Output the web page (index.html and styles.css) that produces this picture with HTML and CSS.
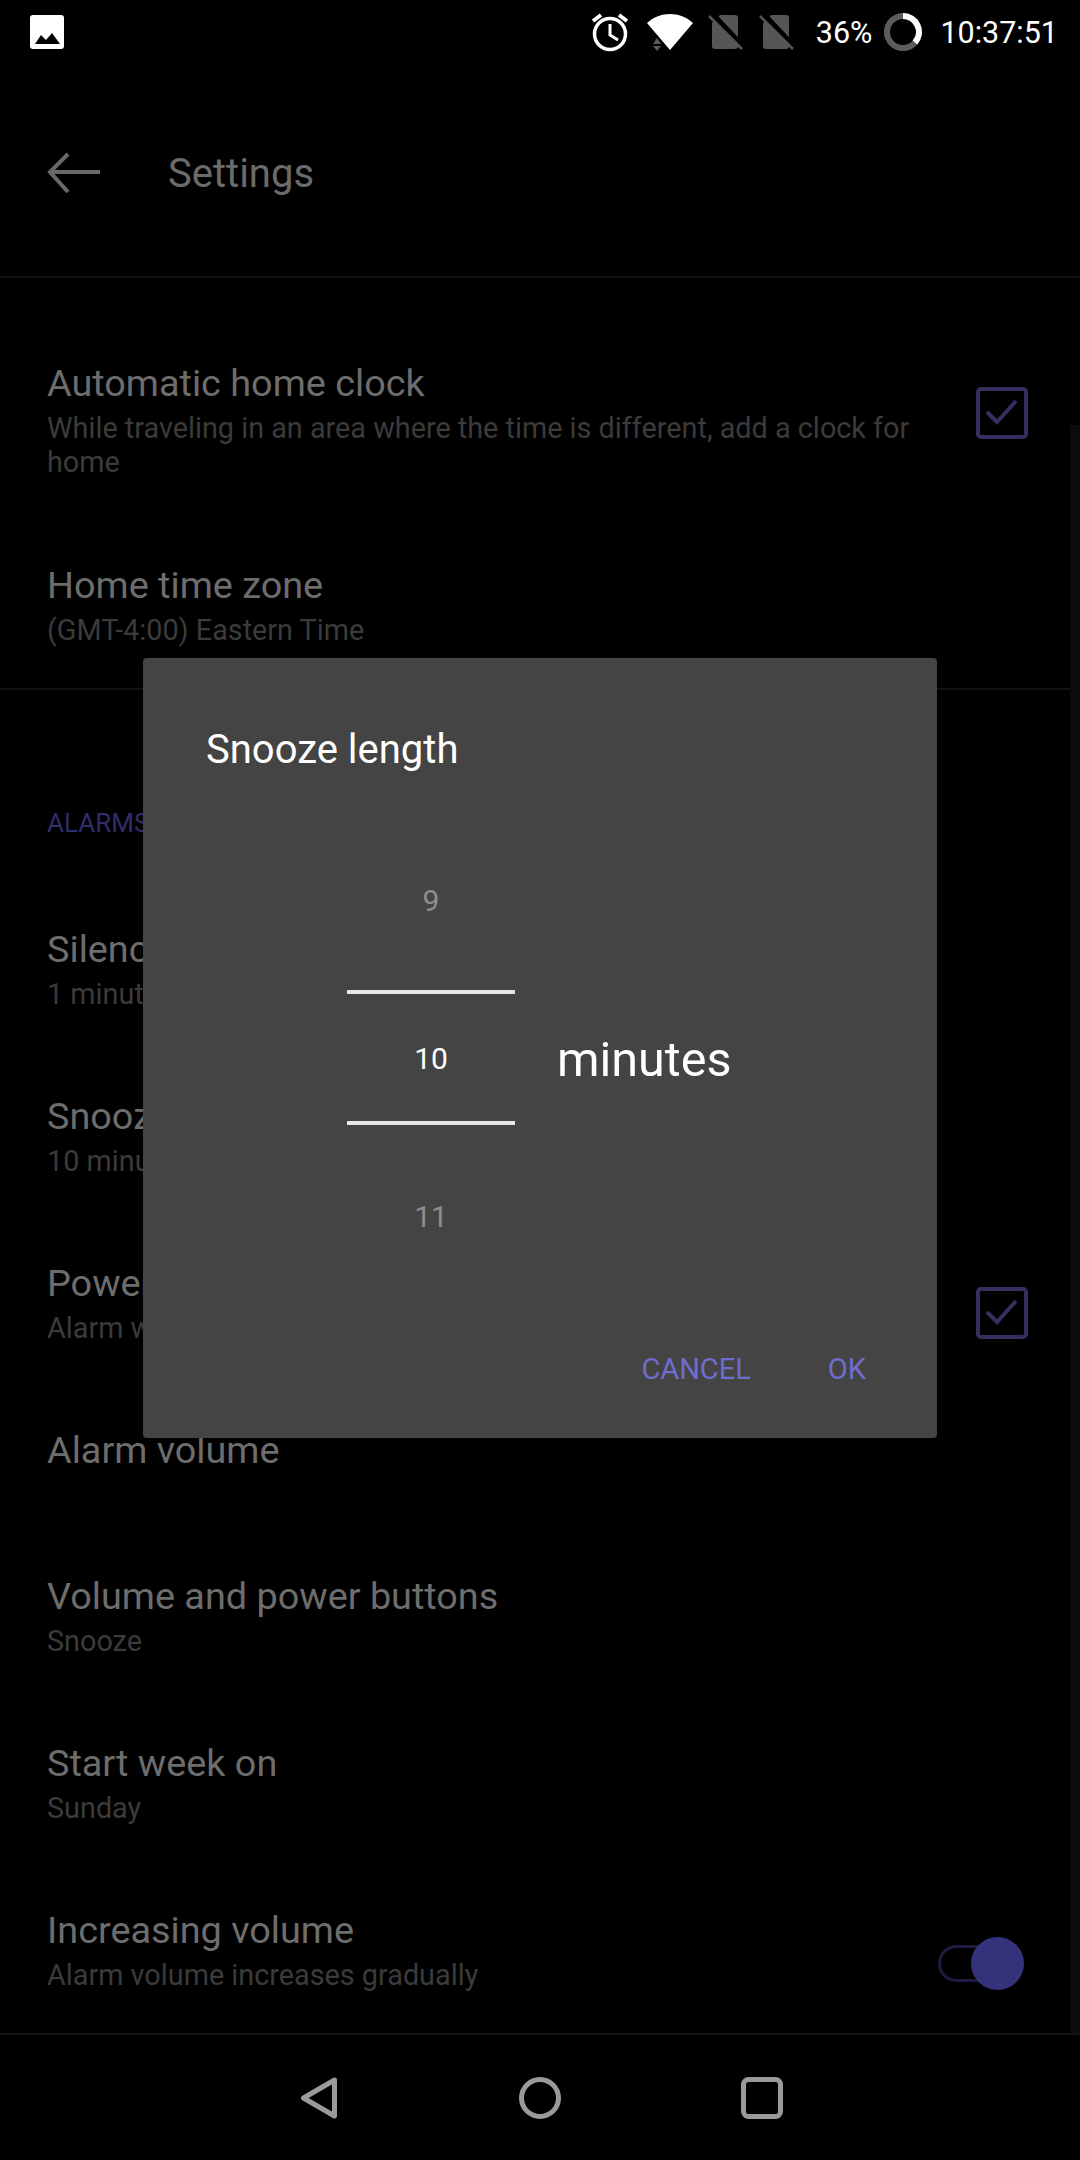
FILE: index.html
```html
<!DOCTYPE html>
<html>
  <head>
    <meta name="viewport" content="width=device-width, initial-scale=1" />
    <title>Settings</title>
    <link rel="stylesheet" href="styles.css">
  </head>
  <body>
    <div class="screen">
      <div class="statusbar">
        <svg class="icon-picture" width="34" height="34" viewBox="0 0 34 34">
          <path fill="#fff" d="M3 0h28a3 3 0 0 1 3 3v28a3 3 0 0 1-3 3H3a3 3 0 0 1-3-3V3a3 3 0 0 1 3-3z"/>
          <path fill="#000" d="M5 29l6-9 5 5 6-7 8 11z"/>
        </svg>
        <div class="status-right">
          <svg class="icon-alarm" width="38" height="40" viewBox="0 0 38 40">
            <g fill="none" stroke="#fff" stroke-width="3.5">
              <circle cx="19" cy="22" r="15.5"/>
              <path d="M19 12v11l8 5" stroke-width="3"/>
              <path d="M2 9l8-6M36 9l-8-6" stroke-width="4"/>
            </g>
          </svg>
          <svg class="icon-wifi" width="46" height="38" viewBox="0 0 46 38">
            <path fill="#fff" d="M0 10C13-2 33-2 46 10L23 37z"/>
            <path fill="#5a5a5a" d="M10 25l-4 6h8zM6 33h8l-4 5z"/>
          </svg>
          <svg class="icon-sim" width="36" height="36" viewBox="0 0 36 36">
            <path fill="#565656" d="M12 1h15a3 3 0 0 1 3 3v28a3 3 0 0 1-3 3H7a3 3 0 0 1-3-3V9z"/>
            <path stroke="#000" stroke-width="6" d="M4 0l32 34"/>
            <path stroke="#565656" stroke-width="2.5" d="M1 2l33 33"/>
          </svg>
          <svg class="icon-sim" width="36" height="36" viewBox="0 0 36 36">
            <path fill="#565656" d="M12 1h15a3 3 0 0 1 3 3v28a3 3 0 0 1-3 3H7a3 3 0 0 1-3-3V9z"/>
            <path stroke="#000" stroke-width="6" d="M4 0l32 34"/>
            <path stroke="#565656" stroke-width="2.5" d="M1 2l33 33"/>
          </svg>
          <span class="battery-text">36%</span>
          <svg class="icon-ring" width="38" height="38" viewBox="0 0 38 38">
            <circle cx="19" cy="19" r="16" fill="none" stroke="#5c5c5c" stroke-width="6"/>
            <path d="M19 3A16 16 0 0 1 31 29.500" fill="none" stroke="#fff" stroke-width="6"/>
          </svg>
          <span class="clock">10:37:51</span>
        </div>
      </div>

      <div class="toolbar">
        <svg class="icon-back" width="54" height="42" viewBox="0 0 54 42">
          <path d="M53 20H4M21 2L3 20l18 20" fill="none" stroke="#686868" stroke-width="4"/>
        </svg>
        <span class="toolbar-title">Settings</span>
      </div>

      <div class="list">
        <div class="section">
          <div class="row row-tall">
            <div class="row-text">
              <div class="row-title">Automatic home clock</div>
              <div class="row-sub">While traveling in an area where the time is different, add a clock for home</div>
            </div>
            <svg class="checkbox" width="52" height="52" viewBox="0 0 52 52">
              <rect x="2" y="2" width="48" height="48" rx="3" fill="none" stroke="#33305f" stroke-width="4"/>
              <path d="M11 25l10 10 19-21" fill="none" stroke="#33305f" stroke-width="4"/>
            </svg>
          </div>
          <div class="row row-last">
            <div class="row-text">
              <div class="row-title">Home time zone</div>
              <div class="row-sub">(GMT-4:00) Eastern Time</div>
            </div>
          </div>
        </div>

        <div class="section-head">ALARMS</div>

        <div class="row">
          <div class="row-text">
            <div class="row-title">Silence after</div>
            <div class="row-sub">1 minute</div>
          </div>
        </div>
        <div class="row">
          <div class="row-text">
            <div class="row-title">Snooze length</div>
            <div class="row-sub">10 minutes</div>
          </div>
        </div>
        <div class="row">
          <div class="row-text">
            <div class="row-title">Power button</div>
            <div class="row-sub">Alarm will snooze</div>
          </div>
          <svg class="checkbox" width="52" height="52" viewBox="0 0 52 52">
            <rect x="2" y="2" width="48" height="48" rx="3" fill="none" stroke="#33305f" stroke-width="4"/>
            <path d="M11 25l10 10 19-21" fill="none" stroke="#33305f" stroke-width="4"/>
          </svg>
        </div>
        <div class="row row-single">
          <div class="row-text">
            <div class="row-title">Alarm volume</div>
          </div>
        </div>
        <div class="row">
          <div class="row-text">
            <div class="row-title">Volume and power buttons</div>
            <div class="row-sub">Snooze</div>
          </div>
        </div>
        <div class="row">
          <div class="row-text">
            <div class="row-title">Start week on</div>
            <div class="row-sub">Sunday</div>
          </div>
        </div>
        <div class="row row-last">
          <div class="row-text">
            <div class="row-title">Increasing volume</div>
            <div class="row-sub">Alarm volume increases gradually</div>
          </div>
          <div class="toggle">
            <div class="toggle-track"></div>
            <div class="toggle-knob"></div>
          </div>
        </div>
      </div>

      <div class="navbar">
        <svg width="38" height="42" viewBox="0 0 38 42">
          <path d="M34.500 3L3.500 21l31 18z" fill="none" stroke="#9a9a9a" stroke-width="5" stroke-linejoin="round"/>
        </svg>
        <svg class="nav-home" width="42" height="42" viewBox="0 0 42 42">
          <circle cx="21" cy="21" r="18.500" fill="none" stroke="#9a9a9a" stroke-width="5"/>
        </svg>
        <svg class="nav-recent" width="42" height="42" viewBox="0 0 42 42">
          <rect x="2.500" y="2.500" width="37" height="37" rx="5" fill="none" stroke="#9a9a9a" stroke-width="5"/>
        </svg>
      </div>

      <div class="scrollbar"></div>

      <div class="dialog">
        <div class="dialog-title">Snooze length</div>
        <div class="picker-row">
          <div class="picker">
            <div class="picker-item picker-first">9</div>
            <div class="picker-item picker-current">10</div>
            <div class="picker-item">11</div>
          </div>
          <div class="picker-unit">minutes</div>
        </div>
        <div class="dialog-actions">
          <span class="dialog-btn">CANCEL</span>
          <span class="dialog-btn">OK</span>
        </div>
      </div>
    </div>
  </body>
</html>
```

FILE: styles.css
```css
* {
  box-sizing: border-box;
}

body {
  margin: 0;
  background-color: #000;
  font-family: Roboto, "Liberation Sans", sans-serif;
}

svg {
  display: block;
  flex: none;
}

.screen {
  position: relative;
  width: 1080px;
  height: 2160px;
  overflow: hidden;
  display: flex;
  flex-direction: column;
}

/* status bar */
.statusbar {
  height: 64px;
  display: flex;
  justify-content: space-between;
  align-items: center;
  padding: 0 22px 0 30px;
}

.status-right {
  display: flex;
  align-items: center;
  color: #fff;
  font-size: 30.500px;
}

.icon-wifi {
  margin-left: 18px;
}

.icon-sim {
  margin-left: 15px;
}

.battery-text {
  margin-left: 21px;
}

.icon-ring {
  margin-left: 12px;
}

.clock {
  margin-left: 18px;
}

/* toolbar */
.toolbar {
  height: 214px;
  display: flex;
  align-items: center;
  padding: 6px 0 0 47px;
  border-bottom: 2px solid #121212;
}

.toolbar-title {
  margin-left: 67px;
  color: #6b6b6b;
  font-size: 40px;
}

/* list */
.list {
  flex: 1;
  padding-top: 48px;
}

.section {
  border-bottom: 2px solid #121212;
}

.section-head {
  height: 202px;
  padding: 116px 47px 0;
  color: #2f2d6b;
  font-size: 26px;
  line-height: 34px;
}

.row {
  height: 167px;
  display: flex;
  justify-content: space-between;
  align-items: flex-start;
  padding: 32px 52px 0 47px;
}

.row-tall {
  height: 202px;
}

.row-single {
  height: 146px;
}

.row-last {
  height: 160px;
}

.row-text {
  width: 900px;
}

.row-title {
  color: #6d6d6d;
  font-size: 37.800px;
  line-height: 50px;
}

.row-sub {
  margin-top: 3px;
  color: #3b3b3b;
  font-size: 28.800px;
  line-height: 34px;
}

.checkbox {
  margin-top: 29px;
}

.toggle {
  position: relative;
  width: 87px;
  height: 53px;
  margin: 32px 4px 0 0;
}

.toggle-track {
  position: absolute;
  left: 0;
  top: 8px;
  width: 70px;
  height: 37px;
  border: 3px solid #1e1c40;
  border-radius: 19px;
}

.toggle-knob {
  position: absolute;
  right: 0;
  top: 0;
  width: 53px;
  height: 53px;
  border-radius: 50%;
  background-color: #33327a;
}

/* nav bar */
.navbar {
  height: 127px;
  flex: none;
  display: flex;
  padding: 42px 0 0 300px;
  border-top: 2px solid #121212;
}

.nav-home {
  margin-left: 181px;
}

.nav-recent {
  margin-left: 180px;
}

.scrollbar {
  position: absolute;
  right: 0;
  top: 425px;
  width: 10px;
  height: 1608px;
  background-color: #0c0c0c;
}

/* dialog */
.dialog {
  position: absolute;
  left: 143px;
  top: 658px;
  width: 794px;
  height: 780px;
  border-radius: 4px;
  background-color: #444;
  display: flex;
  flex-direction: column;
}

.dialog-title {
  padding: 68px 0 0 63px;
  color: #fff;
  font-size: 40px;
  line-height: 48px;
}

.picker-row {
  display: flex;
  align-items: center;
  margin-top: 32px;
  padding-left: 204px;
}

.picker {
  width: 168px;
  text-align: center;
  color: #8e8e8e;
  font-size: 30px;
}

.picker-item {
  height: 184px;
  line-height: 184px;
}

.picker-first {
  line-height: 190px;
}

.picker-current {
  height: 135px;
  line-height: 129px;
  color: #fff;
  border-top: 4px solid #e6e6e6;
  border-bottom: 4px solid #e6e6e6;
}

.picker-unit {
  margin-left: 42px;
  padding-top: 3px;
  color: #fff;
  font-size: 48.500px;
}

.dialog-actions {
  display: flex;
  justify-content: flex-end;
  gap: 77px;
  margin-top: 42px;
  padding-right: 71px;
}

.dialog-btn {
  color: #6f6dd0;
  font-size: 29px;
  line-height: 36px;
}
```
